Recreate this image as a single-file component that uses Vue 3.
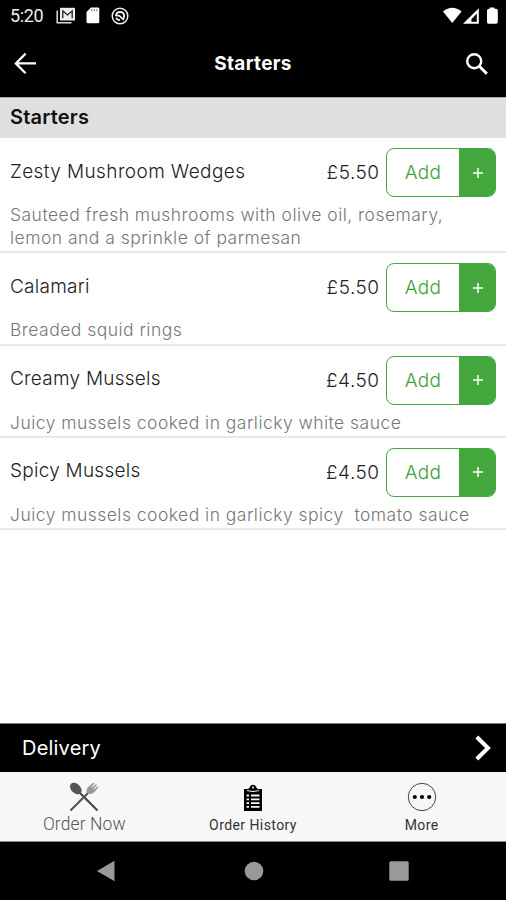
<script setup>
const items = [
  { name: 'Zesty Mushroom Wedges', price: '£5.50', text: 'Sauteed fresh mushrooms with olive oil, rosemary,\nlemon and a sprinkle of parmesan', id: 'zesty' },
  { name: 'Calamari', price: '£5.50', text: 'Breaded squid rings', id: 'calamari' },
  { name: 'Creamy Mussels', price: '£4.50', text: 'Juicy mussels cooked in garlicky white sauce', id: 'creamy' },
  { name: 'Spicy Mussels', price: '£4.50', text: 'Juicy mussels cooked in garlicky spicy  tomato sauce', id: 'spicy' },
]
</script>

<template>
  <div class="screen">
    <header class="top">
      <div class="status">
        <span class="time">5:20</span>
        <svg class="mail" width="20" height="18" viewBox="0 0 20 18">
          <path d="M1.2 3.5V15.7H15.5" fill="none" stroke="#ddd" stroke-width="1.5" />
          <path d="M4 .8H19V13.5H4Z" fill="#eee" />
          <path d="M6.8 11.2V4L11.5 8L16.2 4V11.2" fill="none" stroke="#222" stroke-width="1.3" />
        </svg>
        <svg class="sd" width="14" height="17" viewBox="0 0 14 17">
          <path d="M5 .5H12Q13.3 .5 13.3 1.8V14.8Q13.3 16.2 12 16.2H1.8Q.5 16.2 .5 14.8V5Z" fill="#fff" />
          <path d="M5.8 2V4.2M8.3 2V4.2M10.8 2V4.2" stroke="#777" stroke-width="1" />
        </svg>
        <svg class="sync" width="18" height="18" viewBox="0 0 18 18" fill="none" stroke="#eee">
          <circle cx="9" cy="9" r="7.8" stroke-width="1.5" />
          <path d="M4.8 9.2Q5.2 5 9 5Q12.8 5 13.2 8.8Q13.2 11 11.8 12.2" stroke-width="1.8" />
          <path d="M5 8.6H8.2L12.8 13M5.2 10.8Q6 13 9 13.2" stroke-width="1.7" />
        </svg>
        <span class="grow"></span>
        <svg class="signals" width="56" height="18" viewBox="0 0 56 18" fill="#fff">
          <path d="M0 4.5Q9.3 -3 18.6 4.5L9.3 16Z" />
          <path fill-rule="evenodd" d="M35.8 1.2V16.8H20ZM33.8 6.5L28.4 12.2V14.8H33.8Z" />
          <path d="M46.8 1.8V.4H51.4V1.8H53Q54.8 1.8 54.8 3.6V15Q54.8 16.8 53 16.8H45.8Q44 16.8 44 15V3.6Q44 1.8 45.8 1.8Z" />
        </svg>
      </div>
      <div class="appbar">
        <svg class="back" width="24" height="24" viewBox="0 0 24 24" fill="none" stroke="#fff" stroke-width="2.2">
          <path d="M11.6 1.6L1.8 11.4L11.6 21.2M1.8 11.4H22" />
        </svg>
        <h1>Starters</h1>
        <svg class="search" width="24" height="24" viewBox="0 0 24 24" fill="none" stroke="#fff">
          <circle cx="9.2" cy="9.2" r="7" stroke-width="2.4" />
          <path d="M14.3 14.3L21.8 21.8" stroke-width="3" />
        </svg>
      </div>
    </header>

    <h2>Starters</h2>
    <main>
      <section v-for="item in items" :key="item.id" class="item" :class="item.id">
        <div class="line">
          <h3>{{ item.name }}</h3>
          <span class="price">{{ item.price }}</span>
          <button><span class="add">Add</span><span class="plus"><svg width="12" height="12" viewBox="0 0 12 12"><path d="M6 1V11M1 6H11" stroke="#fff" stroke-width="1.5" /></svg></span></button>
        </div>
        <p>{{ item.text }}</p>
      </section>
    </main>

    <div class="delivery">
      <span>Delivery</span>
      <svg width="18" height="26" viewBox="0 0 18 26"><path d="M2.8 2L14 13L2.8 24" fill="none" stroke="#fff" stroke-width="4" /></svg>
    </div>
    <nav class="tabs">
      <div class="tab now">
        <svg width="32" height="32" viewBox="0 0 32 32">
          <path d="M10 10L29.5 29.5" stroke="#444" stroke-width="2.2" />
          <path d="M22 10L2.5 29.5" stroke="#555" stroke-width="2.2" />
          <ellipse cx="7.8" cy="7.5" rx="4.6" ry="6.8" transform="rotate(-45 7.8 7.5)" fill="#555" />
          <path d="M18.5 11.5Q18 7.5 21 5.3L25.5 1.5L26.5 2.5L23.4 6L24 6.5L28 3L29 4L25.4 7.8L26 8.5L29.6 5.3L30.4 6.3L26.5 11Q24 13.8 20.5 12.8Z" fill="#999" />
        </svg>
        <span>Order Now</span>
      </div>
      <div class="tab history">
        <svg width="20" height="28" viewBox="0 0 20 28">
          <path d="M1 5H5Q6.5 4.5 7 2.5Q8 .8 10 .8Q12 .8 13 2.5Q13.5 4.5 15 5H19V27H1Z" fill="#000" />
          <path d="M4 6.6Q10 8.4 16 6.6" fill="none" stroke="#f7f7f7" stroke-width="1" />
          <circle cx="10" cy="3.4" r="1" fill="#f7f7f7" />
          <path d="M3.6 11.5H6M3.6 15.3H6M3.6 19.1H6M3.6 22.9H6M8 11.5H16.5M8 15.3H16.5M8 19.1H16.5M8 22.9H16.5" stroke="#f7f7f7" stroke-width="1.8" />
        </svg>
        <span>Order History</span>
      </div>
      <div class="tab more">
        <svg width="30" height="30" viewBox="0 0 30 30">
          <circle cx="15" cy="15" r="13.7" fill="none" stroke="#444" stroke-width="1" />
          <circle cx="7.8" cy="15" r="2.1" /><circle cx="15" cy="15" r="2.1" /><circle cx="22.2" cy="15" r="2.1" />
        </svg>
        <span>More</span>
      </div>
    </nav>
    <footer>
      <svg class="n-back" width="20" height="22" viewBox="0 0 20 22"><path d="M1 11L18.5 .8V21.2Z" fill="#999" /></svg>
      <svg class="n-home" width="20" height="20" viewBox="0 0 20 20"><circle cx="10" cy="10" r="9.3" fill="#999" /></svg>
      <svg class="n-apps" width="20" height="20" viewBox="0 0 20 20"><rect x=".3" y=".3" width="19.4" height="19.4" rx="1.5" fill="#999" /></svg>
    </footer>
  </div>
</template>

<style>
body { margin: 0; background: #fff; }
</style>

<style scoped>
.screen { width: 506px; height: 900px; display: flex; flex-direction: column; background: #fff; font-family: Inter, "Open Sans", sans-serif; overflow: hidden; }
h1, h2, h3, p { margin: 0; font-weight: 400; }
.top { height: 97px; background: #000; color: #fff; flex: none; }
.status { height: 31px; display: flex; align-items: center; padding: 0 7px 0 10px; box-sizing: border-box; }
.time { font: 400 18px/32px Roboto, sans-serif; width: 46px; color: #eee; letter-spacing: -.4px; }
.sd { margin-left: 10px; }
.sync { margin-left: 11px; }
.grow { flex: 1; }
.appbar { height: 65px; display: grid; grid-template-columns: 24px 1fr 24px; align-items: center; padding: 0 17px 0 14px; }
h1 { font-size: 19px; font-weight: 700; text-align: center; letter-spacing: .3px; padding-left: 3px; }
h2 { height: 41.4px; line-height: 39px; box-sizing: border-box; flex: none; background: #dfdfdf; padding-left: 10px; font-size: 20px; font-weight: 600; color: #111; border-top: 1px solid #aaa; letter-spacing: .2px; }
main { flex: 1; }
.item { height: 92.3px; box-sizing: border-box; border-bottom: 2px solid #e8e8e8; padding: 10px 10px 0; }
.item.zesty { height: 115px; }
.line { display: flex; align-items: center; height: 49px; }
h3 { flex: 1; font-size: 19px; font-weight: 350; color: #222; line-height: 24px; padding-bottom: 2px; white-space: nowrap; letter-spacing: .25px; }
.zesty h3 { letter-spacing: .4px; }
.price { font-size: 19px; font-weight: 350; color: #222; margin-right: 6.5px; letter-spacing: .5px; }
button { width: 110px; height: 49px; box-sizing: border-box; padding: 0; border: 1px solid #43a73d; border-radius: 8px; background: #fff; display: flex; overflow: hidden; font: 300 19px Inter, sans-serif; color: #3ba337; }
.add { width: 72px; line-height: 48px; letter-spacing: .3px; }
.plus { flex: 1; background: #43a73d; display: flex; align-items: center; justify-content: center; height: 47px; padding-left: 1px; }
p { font-size: 17.5px; font-weight: 300; line-height: 23px; color: #777; white-space: pre; padding-top: 6px; letter-spacing: .47px; }
.delivery { height: 49px; flex: none; background: #000; border-top: 1px solid #777; box-sizing: border-box; color: #fff; display: flex; align-items: center; justify-content: space-between; padding: 0 14px 0 22px; font-size: 20px; letter-spacing: .2px; }
.tabs { height: 70px; flex: none; background: #f7f7f7; border-bottom: 1px solid #888; box-sizing: border-box; display: grid; grid-template-columns: repeat(3, 1fr); font-family: Roboto, sans-serif; color: #333; }
.tab { display: flex; flex-direction: column; align-items: center; }
.tab span { font-size: 14px; line-height: 18px; letter-spacing: .42px; }
.tab.now span { font-size: 17.5px; font-weight: 300; line-height: 22px; color: #555; letter-spacing: .1px; }
.now svg { margin-top: 9px; }
.history svg { margin-top: 12px; margin-bottom: 4px; }
.more svg { margin-top: 10px; margin-bottom: 4px; }
footer { height: 58px; flex: none; background: #000; display: grid; grid-template-columns: 180px 146px 180px; align-items: center; justify-items: center; }
.n-back { margin-left: 32px; }
.n-home { margin-left: 1px; }
.n-apps { margin-right: 34px; }
</style>
